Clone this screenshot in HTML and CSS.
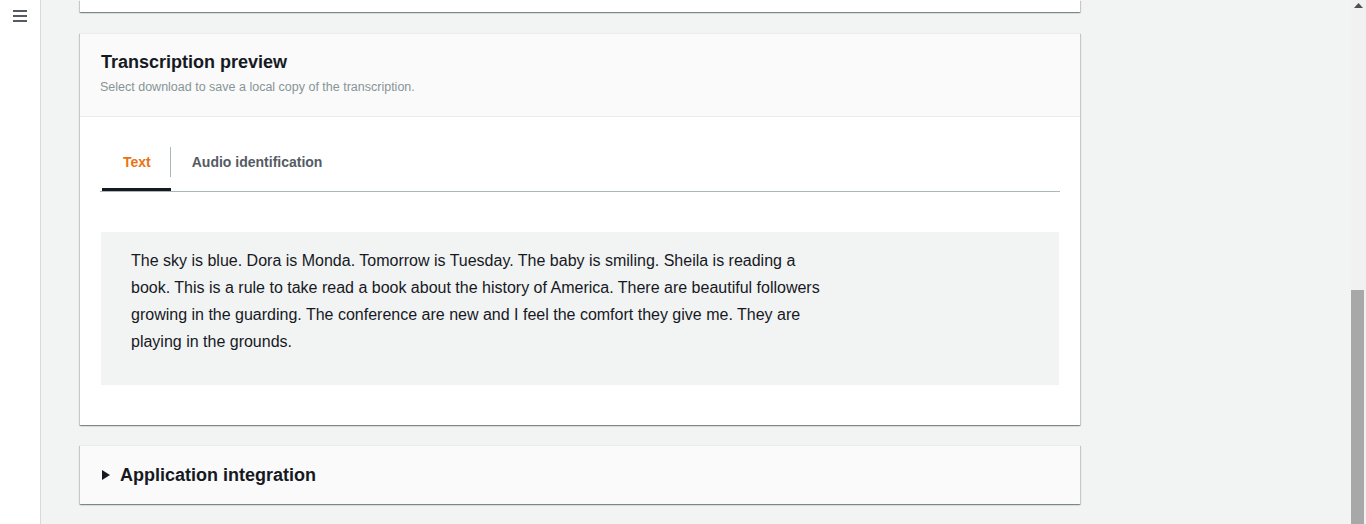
FILE: index.html
```html
<!DOCTYPE html>
<html lang="en">
<head>
<meta charset="utf-8">
<title>Transcription preview</title>
<link rel="stylesheet" href="styles.css">
</head>
<body>
<div class="app">
  <nav class="sidebar">
    <button class="menu-btn" aria-label="Open navigation">
      <svg width="14" height="13" viewBox="0 0 14 13"><rect x="0" y="0" width="14" height="2" fill="#545b64"/><rect x="0" y="5" width="14" height="2" fill="#545b64"/><rect x="0" y="10" width="14" height="2" fill="#545b64"/></svg>
    </button>
  </nav>
  <main class="main">
    <section class="card card-stub"></section>

    <section class="card card-main">
      <header class="card-header">
        <h2 class="card-title">Transcription preview</h2>
        <p class="card-desc">Select download to save a local copy of the transcription.</p>
      </header>
      <div class="card-body">
        <div class="tabs">
          <div class="tab tab-active"><span class="tab-label tab-label-divided">Text</span></div>
          <div class="tab"><span class="tab-label">Audio identification</span></div>
        </div>
        <div class="transcript">
          <p class="transcript-text">The sky is blue. Dora is Monda. Tomorrow is Tuesday. The baby is smiling. Sheila is reading a book. This is a rule to take read a book about the history of America. There are beautiful followers growing in the guarding. The conference are new and I feel the comfort they give me. They are playing in the grounds.</p>
        </div>
      </div>
    </section>

    <section class="card card-collapsed">
      <svg class="caret" width="8" height="10" viewBox="0 0 8 10"><path d="M0 0 L8 5 L0 10 Z" fill="#16191f"/></svg>
      <h2 class="card-title">Application integration</h2>
    </section>
  </main>
  <div class="scrollbar">
    <svg class="scroll-arrow" width="9" height="5" viewBox="0 0 9 5"><path d="M4.5 0 L9 5 L0 5 Z" fill="#505050"/></svg>
    <div class="scroll-track"><div class="scroll-thumb"></div></div>
  </div>
</div>
</body>
</html>
```
FILE: styles.css
```css
* { box-sizing: border-box; }
html, body { margin: 0; padding: 0; }
body {
  font-family: "Liberation Sans", Arial, sans-serif;
  color: #16191f;
  background: #f2f3f3;
}
.app {
  display: flex;
  height: 524px;
  overflow: hidden;
}
.sidebar {
  width: 41px;
  flex: none;
  background: #ffffff;
  border-right: 1px solid #d5dbdb;
}
.menu-btn {
  display: block;
  margin: 10px 0 0 13px;
  padding: 0;
  border: 0;
  background: none;
  line-height: 0;
}
.main {
  flex: 1;
  padding-left: 39px;
  display: flex;
  flex-direction: column;
}
.card {
  width: 1000px;
  background: #ffffff;
  box-shadow: 0 1px 1px 0 rgba(0, 28, 36, 0.3), 1px 1px 1px 0 rgba(0, 28, 36, 0.15), -1px 1px 1px 0 rgba(0, 28, 36, 0.15);
  flex: none;
}
.card-stub { height: 12px; }
.card-main { margin-top: 21px; }
.card-header {
  background: #fafafa;
  border-top: 1px solid #eaeded;
  border-bottom: 1px solid #eaeded;
  padding: 17px 20px 23px;
  height: 84px;
}
.card-header .card-title { padding-left: 1px; }
.card-title {
  margin: 0;
  font-size: 18px;
  line-height: 22px;
  font-weight: 700;
  color: #16191f;
}
.card-desc {
  margin: 6px 0 0;
  font-size: 12.5px;
  line-height: 16px;
  color: #879596;
}
.card-body {
  padding: 30px 20px 40px;
}
.tabs {
  display: flex;
  border-bottom: 1px solid #aab7b8;
  padding-left: 2px;
}
.tab {
  height: 44px;
  border-bottom: 3px solid transparent;
  padding-bottom: 11px;
}
.tab-active { border-bottom-color: #16191f; }
.tab-label {
  display: block;
  height: 30px;
  line-height: 30px;
  padding: 0 21px;
  font-size: 14px;
  font-weight: 700;
  color: #545b64;
}
.tab-active .tab-label { color: #ec7211; }
.tab-label-divided { border-right: 1px solid #aab7b8; padding-right: 19px; }
.transcript {
  margin: 40px 1px 0;
  background: #f2f3f3;
  padding: 15px 30px 30px;
  height: 153px;
}
.transcript-text {
  margin: 0;
  max-width: 700px;
  font-size: 16px;
  line-height: 27px;
  color: #16191f;
}
.card-collapsed {
  margin-top: 20px;
  height: 59px;
  background: #fafafa;
  border-top: 1px solid #eaeded;
  display: flex;
  align-items: center;
  padding: 0 22px 1px;
  gap: 10px;
}
.scrollbar {
  width: 15px;
  flex: none;
  background: #f1f1f1;
  display: flex;
  flex-direction: column;
}
.scroll-arrow {
  display: block;
  margin: 3px 0 0 3px;
}
.scroll-track {
  flex: 1;
  padding: 282px 2px 0 0;
}
.scroll-thumb {
  height: 100%;
  background: #a8a8a8;
}
```
